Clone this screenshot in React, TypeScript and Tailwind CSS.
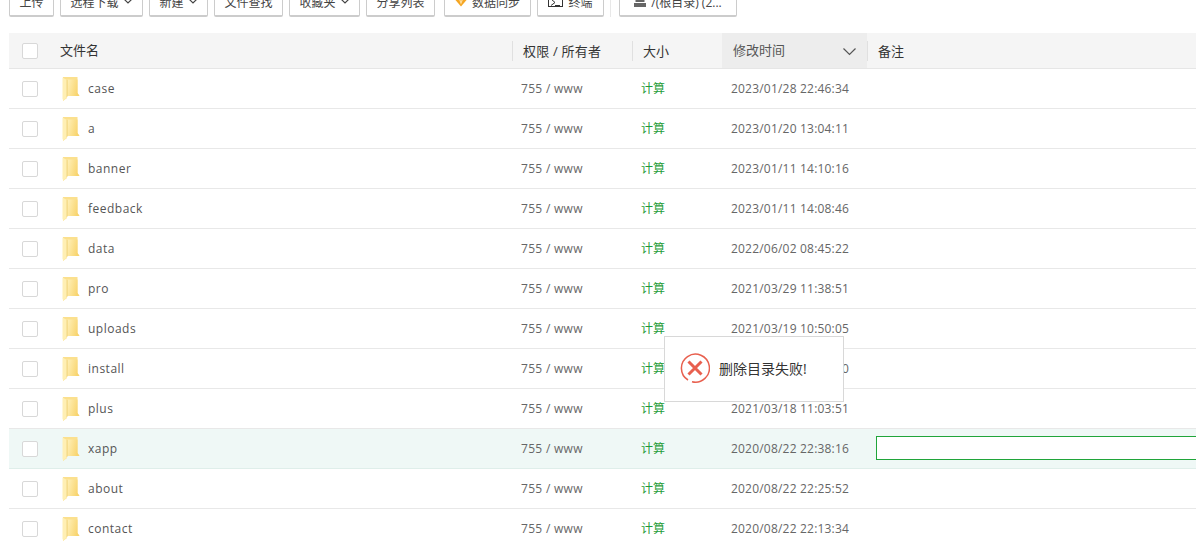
const rows = [
  { name: 'case', date: '2023/01/28 22:46:34' },
  { name: 'a', date: '2023/01/20 13:04:11' },
  { name: 'banner', date: '2023/01/11 14:10:16' },
  { name: 'feedback', date: '2023/01/11 14:08:46' },
  { name: 'data', date: '2022/06/02 08:45:22' },
  { name: 'pro', date: '2021/03/29 11:38:51' },
  { name: 'uploads', date: '2021/03/19 10:50:05' },
  { name: 'install', date: '2021/03/18 11:04:10' },
  { name: 'plus', date: '2021/03/18 11:03:51' },
  { name: 'xapp', date: '2020/08/22 22:38:16', active: true },
  { name: 'about', date: '2020/08/22 22:25:52' },
  { name: 'contact', date: '2020/08/22 22:13:34' },
];

function FolderIcon() {
  return (
    <svg width="18" height="24" viewBox="0 0 18 24" className="shrink-0">
      <defs>
        <linearGradient id="folderBody" x1="0" y1="0" x2="1" y2="0.3">
          <stop offset="0" stopColor="#fff0b8" />
          <stop offset="1" stopColor="#f8d46e" />
        </linearGradient>
      </defs>
      <path d="M1 0 L15.5 0 L15.5 16 L17.5 19 L5 19 L5 21 L1 24 Z" fill="#fbe08e" />
      <path d="M5.5 2.5 L15.5 2.5 L15.5 16 L17.5 19 L5.5 19 Z" fill="url(#folderBody)" />
      <path d="M0.5 0.5 L5 3 L5 20.5 L1.5 23.5 L0.5 22 Z" fill="#ffefb4" />
      <path d="M5 3 L5 20" stroke="#e8c766" strokeWidth="0.6" />
    </svg>
  );
}

function Caret() {
  return (
    <svg width="10" height="6" viewBox="0 0 10 6" fill="none" stroke="#444" strokeWidth="1.2" className="shrink-0 -ml-px -mt-[3px]">
      <path d="M0.5 0.5 L5 5 L9.5 0.5" />
    </svg>
  );
}

function Checkbox() {
  return <span className="block w-4 h-4 bg-white border border-[#d8d8d8] rounded-[2px] shrink-0" />;
}

function ToolButton({ w, children }: { w: string; children: React.ReactNode }) {
  return (
    <div className={`${w} h-[30px] pt-[2px] flex items-center justify-center gap-[5px] bg-white border border-[#ccc] border-b-2 rounded-[2px] text-xs text-[#444] whitespace-nowrap`}>
      {children}
    </div>
  );
}

export default function App() {
  return (
    <div className="h-[542px] overflow-hidden bg-white relative text-[#666] font-['Open_Sans','Noto_Sans_CJK_SC',sans-serif]">
      {/* Toolbar */}
      <div className="flex -mt-[13px] ml-[9px] h-[31px] gap-[6px]">
        <ToolButton w="w-[45px]">上传</ToolButton>
        <ToolButton w="w-[83px]">
          远程下载 <Caret />
        </ToolButton>
        <ToolButton w="w-[59px]">
          新建 <Caret />
        </ToolButton>
        <ToolButton w="w-[69px]">文件查找</ToolButton>
        <ToolButton w="w-[71px]">
          收藏夹 <Caret />
        </ToolButton>
        <ToolButton w="w-[69px]">分享列表</ToolButton>
        <ToolButton w="w-[87px] ml-[3px]">
          <svg width="12" height="13" viewBox="0 0 12 13">
            <path d="M3 0 L9 0 L12 3.5 L6 10.5 L0 3.5 Z" fill="#f5a623" />
            <path d="M3.5 2 L5 2 L6 6 L7 2 L8.5 2 L6 8.5 Z" fill="#ffe2a8" />
          </svg>
          数据同步
        </ToolButton>
        <ToolButton w="w-[67px]">
          <svg width="15" height="14" viewBox="0 0 15 14" fill="none" stroke="#333" className="-mt-[5px]">
            <rect x="0.5" y="0.5" width="14" height="13" />
            <path d="M3 6 L7 9.5 L3 12.5 M7 12.5 H12" />
          </svg>
          终端
        </ToolButton>
        <div className="w-px h-[30px] bg-[#e8e8e8]" />
        <ToolButton w="w-[118px] ml-[2px]">
          <svg width="12" height="14" viewBox="0 0 12 14" className="-mt-1">
            <rect x="1.5" y="2" width="9" height="6" fill="#666" />
            <rect x="0" y="9" width="12" height="4" fill="#666" />
          </svg>
          /(根目录) (2...
        </ToolButton>
      </div>

      {/* Table */}
      <div className="ml-[9px] mt-[15px]">
        <div className="grid grid-cols-[503px_120px_90px_145px_1fr] h-9 items-center bg-[#f5f5f5] border-b border-[#e6e6e6] text-[13px] text-[#333]">
          <div className="flex items-center pl-[13px]">
            <Checkbox />
            <span className="ml-[22px]">文件名</span>
          </div>
          <div className="h-5 border-l border-[#e0e0e0] pl-[10px] leading-5 tracking-[0.2px]">权限 / 所有者</div>
          <div className="h-5 border-l border-[#e0e0e0] pl-[10px] leading-5">大小</div>
          <div className="h-full bg-[#ededed] flex items-center justify-between pl-[11px] pr-[11px] text-[#555]">
            修改时间
            <svg width="13" height="8" viewBox="0 0 13 8" fill="none" stroke="#555" strokeWidth="1.2" className="mt-0.5">
              <path d="M0.5 0.5 L6.5 6.5 L12.5 0.5" />
            </svg>
          </div>
          <div className="h-5 border-l border-[#e0e0e0] pl-[10px] leading-5">备注</div>
        </div>

        {rows.map((row) => (
          <div
            key={row.name}
            className={`grid grid-cols-[503px_120px_90px_145px_1fr] h-10 items-center border-b text-xs ${row.active ? 'bg-[#eff8f6] border-[#dfeeea]' : 'border-[#e8e8e8]'}`}
          >
            <div className="flex items-center pl-[13px]">
              <Checkbox />
              <span className="ml-6 flex items-center gap-[8px]">
                <FolderIcon />
                <span className="text-[#555] tracking-[0.5px]">{row.name}</span>
              </span>
            </div>
            <div className="pl-[9px] tracking-[0.3px]">755 / www</div>
            <div className="pl-[9px] text-[#1f9d3a]">计算</div>
            <div className="pl-[9px] tracking-[0.2px] whitespace-nowrap">{row.date}</div>
            <div className="pl-[9px] overflow-hidden">
              {row.active && <div className="w-[340px] h-6 mb-px bg-white border border-[#20a53a]" />}
            </div>
          </div>
        ))}
      </div>

      {/* Toast */}
      <div className="absolute left-[664px] top-[336px] w-[180px] h-[66px] bg-white border border-[#d8d8d8] flex items-center pl-[15px] gap-[9px] text-sm text-[#333]">
        <svg width="30" height="30" viewBox="0 0 30 30" fill="none" stroke="#e8604f" className="shrink-0 -mt-0.5">
          <path d="M8 27 A14 14 0 1 1 12 28.7" strokeWidth="1.5" />
          <path d="M8.5 8.5 L21.5 21.5 M21.5 8.5 L8.5 21.5" strokeWidth="3" />
        </svg>
        删除目录失败!
      </div>
    </div>
  );
}
